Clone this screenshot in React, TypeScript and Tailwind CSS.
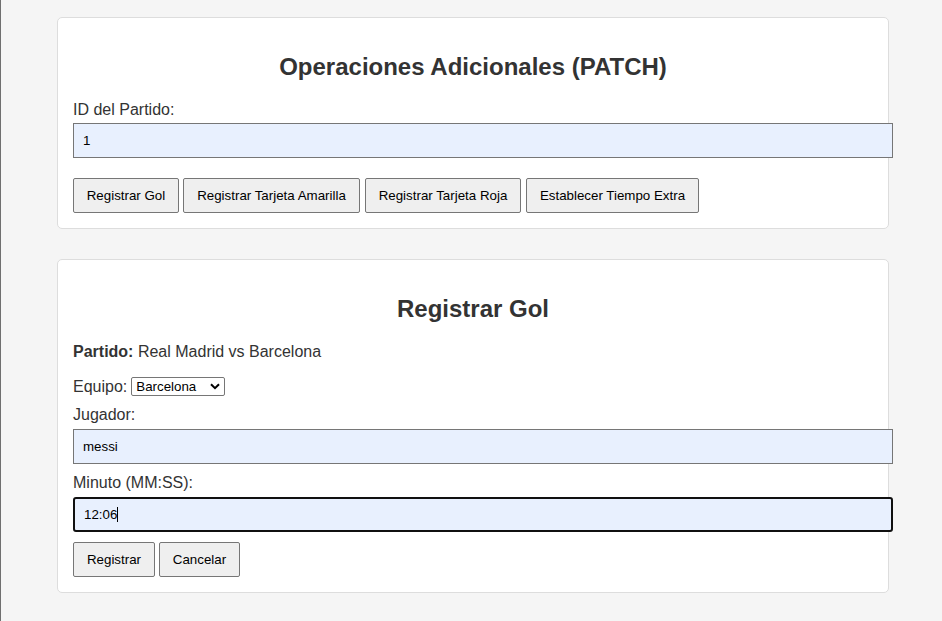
const font = { fontFamily: '"Liberation Sans", Arial, sans-serif' };

function Field({ value, focused = false }: { value: string; focused?: boolean }) {
    if (focused) {
        return (
            <div className="w-[820px] h-[35px] flex items-center px-[9px] bg-[#e8f0fe] border-2 border-[#101010] rounded-[3px] text-[13.333px] text-black">
                <span>{value}</span>
                <span className="inline-block w-px h-[15px] bg-black" />
            </div>
        );
    }
    return (
        <div className="w-[820px] h-[35px] flex items-center px-[9px] bg-[#e8f0fe] border border-[#767676] text-[13.333px] text-black">
            {value}
        </div>
    );
}

function Btn({ label, w }: { label: string; w: string }) {
    return (
        <button className={`${w} h-[35px] bg-[#efefef] border border-[#767676] rounded-[2px] text-[13.333px] text-black flex items-center justify-center shrink-0`}>
            {label}
        </button>
    );
}

export default function App() {
    return (
        <div style={font} className="min-h-[621px] bg-[#f5f5f5] border-l border-[#6f6f6f] pt-[17px] text-[#333]">
            <div className="ml-[56px] w-[832px] flex flex-col gap-[30px]">
                {/* Operaciones PATCH */}
                <div className="bg-white border border-[#dddddd] rounded-[5px] p-[15px]">
                    <h2 className="mt-[20px] mb-[20px] text-[24px] leading-[28px] font-bold text-center">
                        Operaciones Adicionales (PATCH)
                    </h2>
                    <label className="block text-[16px] leading-[18px] mb-[4px]">ID del Partido:</label>
                    <Field value="1" />
                    <div className="mt-[20px] flex">
                        <Btn label="Registrar Gol" w="w-[106px]" />
                        <div className="w-[4px]" />
                        <Btn label="Registrar Tarjeta Amarilla" w="w-[177px]" />
                        <div className="w-[5px]" />
                        <Btn label="Registrar Tarjeta Roja" w="w-[156px]" />
                        <div className="w-[5px]" />
                        <Btn label="Establecer Tiempo Extra" w="w-[173px]" />
                    </div>
                </div>

                {/* Registrar Gol */}
                <div className="bg-white border border-[#dddddd] rounded-[5px] p-[15px]">
                    <h2 className="mt-[20px] mb-[20px] text-[24px] leading-[28px] font-bold text-center">
                        Registrar Gol
                    </h2>
                    <p className="text-[16px] leading-[18px] mb-[16px]">
                        <strong>Partido:</strong> Real Madrid vs Barcelona
                    </p>
                    <div className="h-[19px] flex items-center gap-[4px] text-[16px] mb-[10px]">
                        <span>Equipo:</span>
                        <div className="w-[94px] h-[19px] border border-[#767676] rounded-[2px] flex items-center justify-between pl-[4px] pr-[4px] text-[13.333px] text-black">
                            <span>Barcelona</span>
                            <svg width="10" height="7" viewBox="0 0 10 7">
                                <path d="M1 1.2 L5 5.2 L9 1.2" fill="none" stroke="#000" strokeWidth="2" />
                            </svg>
                        </div>
                    </div>
                    <label className="block text-[16px] leading-[18px] mb-[5px]">Jugador:</label>
                    <Field value="messi" />
                    <label className="block text-[16px] leading-[18px] mt-[10px] mb-[5px]">Minuto (MM:SS):</label>
                    <Field value="12:06" focused />
                    <div className="mt-[10px] flex gap-[4px]">
                        <Btn label="Registrar" w="w-[82px]" />
                        <Btn label="Cancelar" w="w-[81px]" />
                    </div>
                </div>
            </div>
        </div>
    );
}
